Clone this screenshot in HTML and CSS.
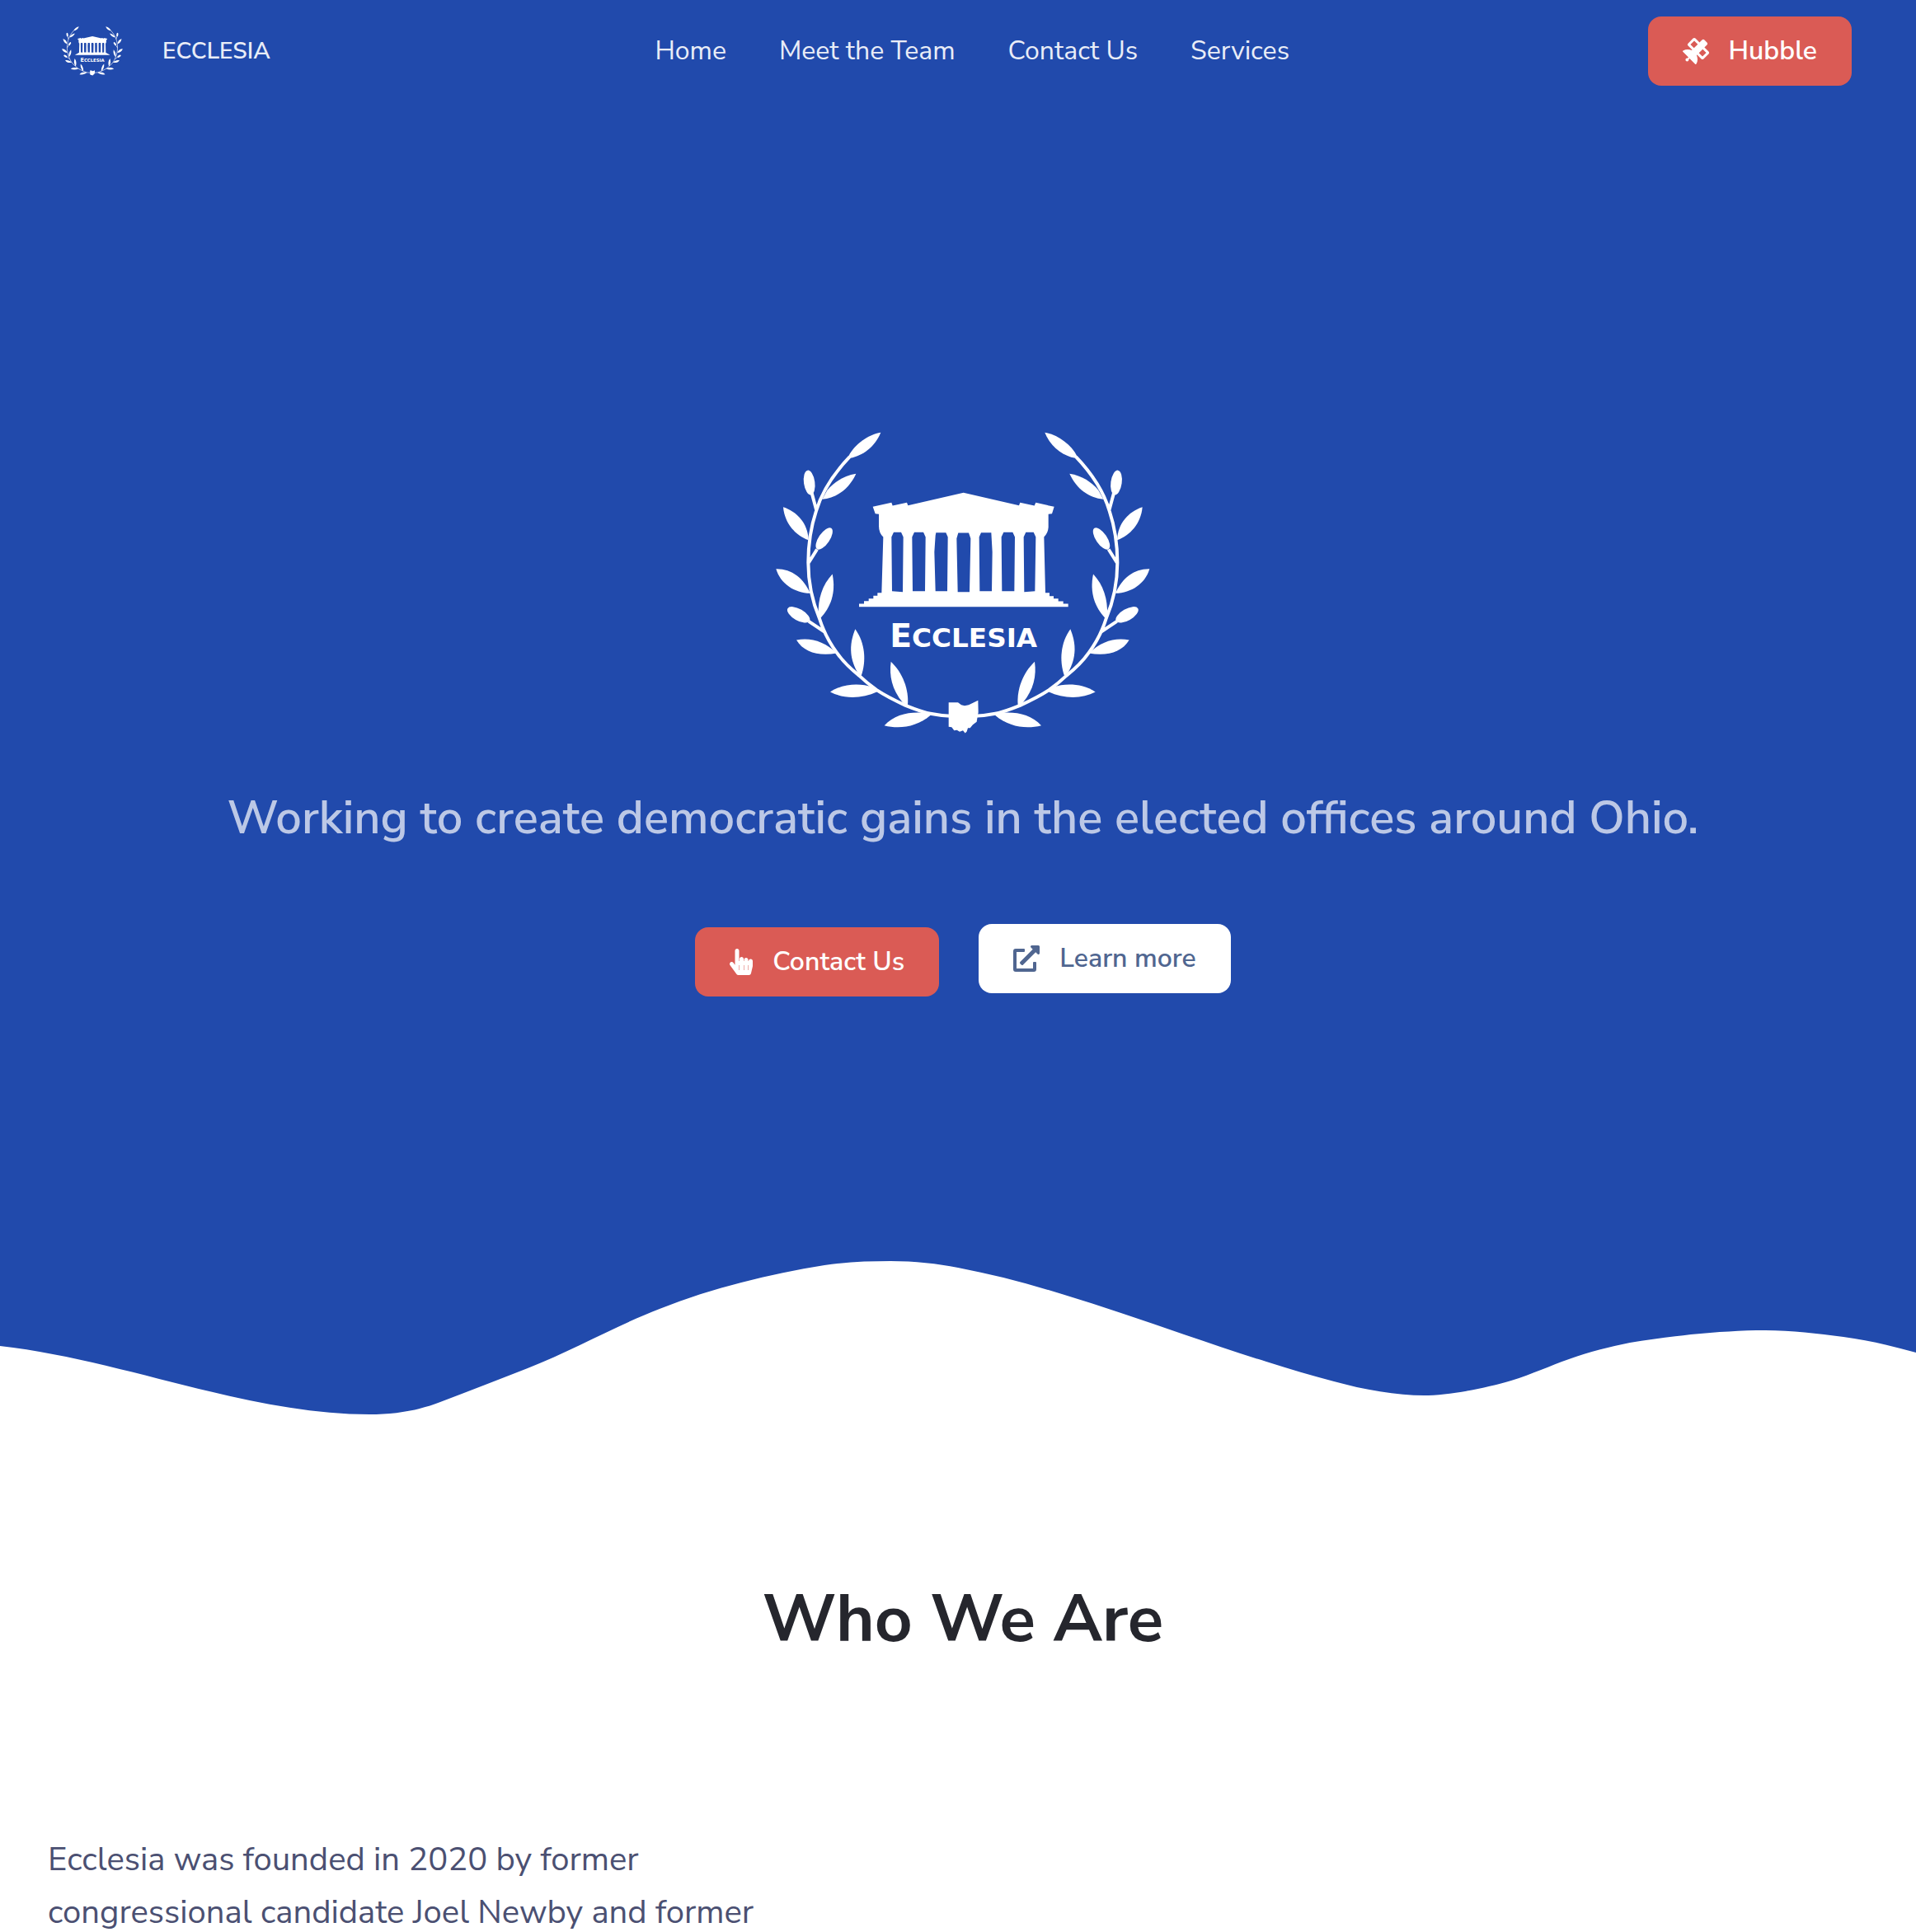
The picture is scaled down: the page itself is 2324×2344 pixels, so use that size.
FILE: index.html
```html
<!DOCTYPE html>
<html lang="en">
<head>
<meta charset="utf-8">
<meta name="viewport" content="width=device-width, initial-scale=1">
<title>Ecclesia</title>
<link rel="stylesheet" href="styles.css">
</head>
<body>
<svg class="sprite" aria-hidden="true">
  <defs>
    <g id="branch">
      <path class="stem" d="M332 163C270 228 228 300 210 360C195 405 181 470 181 548C181 630 198 695 222 752C237 800 262 845 285 876C310 912 338 937 367 960C388 980 408 996 430 1012C465 1035 500 1052 535 1068C565 1080 595 1092 625 1098C650 1103 672 1106 700 1107M194 295L211 358M213 500L183 548M183 762L240 800"/>
      <path d="M445 75C400 82 350 118 328 160L334 168C380 160 425 125 445 75Z"/>
      <path d="M355 225C310 232 275 255 250 285L232 318C285 313 330 280 355 225Z"/>
      <path d="M90 346C140 362 180 405 182 466C135 450 95 405 90 346Z"/>
      <path d="M64 571C120 570 165 605 188 660C130 658 80 625 64 571Z"/>
      <path d="M269 590C283 660 262 710 226 750L218 738C216 680 232 630 269 590Z"/>
      <path d="M138 830C190 820 240 835 285 878C220 890 165 875 138 830Z"/>
      <path d="M352 790C388 840 393 905 374 960L360 948C328 890 332 840 352 790Z"/>
      <path d="M261 1019C310 985 375 988 412 1000L432 1018C375 1045 310 1045 261 1019Z"/>
      <path d="M482 909C525 950 548 1010 543 1068L525 1058C485 1010 475 960 482 909Z"/>
      <path d="M458 1141C495 1100 550 1090 605 1095L627 1103C575 1148 510 1155 458 1141Z"/>
      <ellipse cx="185" cy="257" rx="20" ry="45" transform="rotate(-8 185 257)"/>
      <ellipse cx="239" cy="461" rx="20" ry="46" transform="rotate(34 239 461)"/>
      <ellipse cx="146" cy="738" rx="46" ry="21" transform="rotate(30 146 738)"/>
    </g>
    <g id="emblem">
      <use href="#branch"/>
      <use href="#branch" transform="translate(1487 0) scale(-1 1)"/>
      <path d="M692 1057L726 1057 738 1066 750 1069 765 1066 782 1058 799 1050 800 1093 796 1115 794 1128 780 1138 770 1150 762 1150 758 1163 752 1169 744 1159 732 1164 722 1158 712 1159 703 1147 692 1146Z"/>
      <path transform="translate(330 240)" fill-rule="evenodd" d="M86 105L154 90 158 101 210 90 214 100 416 54 618 100 622 90 674 101 679 90 746 105 738 130 725 132V180Q724 200 709 215L714 418H729V430H744V439H761V449H779V458H797V469H36V458H54V448H71V439H88V429H103V418H118L124 215Q108 200 108 175V132L95 130Z
        M162 198H189L197 215 195 415 156 412 154 215Z M237 198H270L278 215 276 412H231L229 215Z M316 199H352L359 215 357 412H314L310 270 314 210Z M397 200H435L442 220 438 415H395L391 220Z M480 199H517L521 270 519 412H475L473 215Z M562 198H595L603 215 601 412H556L554 215Z M643 198H671L679 215 676 412 637 415 635 215Z"/>
    </g>
  </defs>
</svg>

<header class="hero">
  <div class="navbar">
    <a class="brand" href="#">
      <svg class="brand-mark" viewBox="63 73 1362 1100" aria-hidden="true">
        <use href="#emblem"/>
        <text class="emblem-name" x="746" y="855" text-anchor="middle"><tspan class="emblem-initial">E</tspan>CCLESIA</text>
      </svg>
      <span>ECCLESIA</span>
    </a>
    <nav class="nav">
      <a href="#">Home</a>
      <a href="#">Meet the Team</a>
      <a href="#">Contact Us</a>
      <a href="#">Services</a>
    </nav>
    <button class="btn btn-primary" type="button">
      <svg class="icon" viewBox="0 0 512 512" aria-hidden="true"><path d="M502.6 310l-96.7 96.8a31.9 31.9 0 0 1-45 0L280.6 326.300l-9.900 9.900a190.600 190.600 0 0 1-5.400 168.500c-4.500 8.500-16.400 9.600-23.200 2.800L134.500 400l-17.800 17.800c.7 2.600 1.600 5 1.600 7.800a32 32 0 1 1-32-32c2.800 0 5.200.9 7.800 1.600l17.800-17.800L4.400 269.900c-6.800-6.800-5.700-18.600 2.800-23.200a190.600 190.600 0 0 1 168.500-5.400l9.800-9.800-80.300-80.400a32 32 0 0 1 0-45.100L202 9.300A31.600 31.600 0 0 1 224.500 0a32 32 0 0 1 22.600 9.300l80.300 80.300 47.800-47.900a33.600 33.600 0 0 1 47.500 0l47.500 47.500a33.600 33.600 0 0 1 0 47.500l-47.800 47.900L502.700 265A31.800 31.800 0 0 1 502.600 310ZM219.600 197.400l73.800-73.800-68.900-68.900-73.800 73.800Zm237.700 90.100-68.900-68.900-73.800 73.800 68.900 68.900Z"/></svg>
      Hubble
    </button>
  </div>

  <div class="hero-body">
    <svg class="hero-mark" viewBox="63 73 1362 1100" role="img" aria-label="Ecclesia">
      <use href="#emblem"/>
      <text class="emblem-name" x="746" y="855" text-anchor="middle"><tspan class="emblem-initial">E</tspan>CCLESIA</text>
    </svg>
    <p class="tagline">Working to create democratic gains in the elected offices around Ohio.</p>
    <div class="actions">
      <button class="btn btn-primary" type="button">
        <svg class="icon icon-hand" viewBox="0 0 448 512" aria-hidden="true"><path d="M448 240v96c0 3.084-.356 6.159-1.063 9.162l-32 136C410.686 499.23 394.562 512 376 512H168a40.004 40.004 0 0 1-32.35-16.473l-127.997-176c-12.993-17.866-9.043-42.883 8.822-55.876 17.867-12.994 42.884-9.043 55.877 8.823L104 315.992V40c0-22.091 17.908-40 40-40s40 17.909 40 40v200h8v-40c0-22.091 17.908-40 40-40s40 17.909 40 40v40h8v-24c0-22.091 17.908-40 40-40s40 17.909 40 40v24h8c0-22.091 17.908-40 40-40s40 17.909 40 40zm-256 80h-8v96h8v-96zm88 0h-8v96h8v-96zm88 0h-8v96h8v-96z"/></svg>
        Contact Us
      </button>
      <button class="btn btn-light" type="button">
        <svg class="icon" viewBox="0 0 512 512" aria-hidden="true"><path d="M432 320H400a16 16 0 0 0-16 16V448H64V128H208a16 16 0 0 0 16-16V80a16 16 0 0 0-16-16H48A48 48 0 0 0 0 112V464a48 48 0 0 0 48 48H400a48 48 0 0 0 48-48V336A16 16 0 0 0 432 320ZM488 0h-128c-21.370 0-32.050 25.910-17 41l35.730 35.730L135 320.370a24 24 0 0 0 0 34L157.670 377a24 24 0 0 0 34 0L435.280 133.320 471 169c15 15 41 4.500 41-17V24A24 24 0 0 0 488 0Z"/></svg>
        Learn more
      </button>
    </div>
  </div>

  <svg class="wave" viewBox="0 1500 2324 240" aria-hidden="true"><path d="M0 1633C150 1650 300 1716 448 1716C482 1716 511 1710 534 1701C570 1687 605 1674 640 1660C695 1638 748 1608 800 1588C865 1562 933 1546 1000 1535C1027 1531 1054 1530 1080 1530C1110 1530 1137 1533 1162 1538C1204 1546 1246 1557 1288 1570C1337 1585 1387 1602 1436 1619C1469 1630 1503 1642 1536 1652C1564 1661 1591 1669 1618 1676C1654 1686 1695 1693 1727 1693C1757 1693 1803 1684 1833 1675C1859 1667 1880 1657 1903 1649C1928 1640 1952 1634 1977 1629C2001 1625 2026 1622 2051 1619C2083 1616 2112 1614 2141 1614C2174 1614 2204 1618 2236 1622C2266 1626 2295 1633 2324 1641V1741H0Z"/></svg>
</header>

<main class="about">
  <h1>Who We Are</h1>
  <p class="about-text">Ecclesia was founded in 2020 by former congressional candidate Joel Newby and former</p>
</main>
</body>
</html>
```
FILE: styles.css
```css
* { box-sizing: border-box; }

body {
  margin: 0;
  background: #fff;
  color: #4b5072;
  font-family: "Nunito Sans", Nunito, Lato, "Open Sans", sans-serif;
  font-size: 32px;
  line-height: 48px;
}

.sprite {
  position: absolute;
  width: 0;
  height: 0;
}

.stem {
  fill: none;
  stroke: #fff;
  stroke-width: 12px;
}

.emblem-name {
  font-family: "DejaVu Sans", sans-serif;
  font-weight: 700;
  font-size: 98px;
}

.emblem-initial { font-size: 118px; }

.hero {
  background: #214aac;
  color: #fff;
}

.navbar {
  display: flex;
  align-items: center;
  padding: 20px 78px 20px 75px;
}

.brand {
  display: flex;
  align-items: center;
  gap: 48px;
  margin-right: 32px;
  color: #e9edf7;
  font-size: 28px;
  font-weight: 600;
  text-decoration: none;
}

.brand-mark {
  width: 74px;
  height: 60px;
  fill: #fff;
}

.nav {
  display: flex;
  gap: 64px;
  margin: 0 auto;
}

.nav a {
  color: #e9edf7;
  font-weight: 400;
  text-decoration: none;
}

.btn {
  display: flex;
  align-items: center;
  gap: 24px;
  padding: 18px 42px;
  border: 0;
  border-radius: 16px;
  font: inherit;
  font-weight: 600;
  cursor: pointer;
}

.btn-primary {
  background: #da5b55;
  color: #fff;
}

.btn-light {
  background: #fff;
  color: #506690;
}

.icon {
  width: 32px;
  height: 32px;
  fill: currentColor;
}

.icon-hand { width: 28px; }

.hero-body {
  display: flex;
  flex-direction: column;
  align-items: center;
  padding: 400px 0 291px 12px;
}

.hero-mark {
  width: 454px;
  height: 367px;
  fill: #fff;
}

.tagline {
  margin: 68px 0 94px;
  color: #bcc8e6;
  font-size: 56px;
  font-weight: 600;
  line-height: 68px;
  text-align: center;
}

.actions {
  display: flex;
  align-items: flex-end;
  gap: 48px;
}

.btn-light { margin-bottom: 4px; }

.wave {
  display: block;
  width: 100%;
  fill: #fff;
}

.about { padding: 177px 0 0 12px; }

.about h1 {
  margin: 0 0 211px;
  color: #25262d;
  font-size: 80px;
  font-weight: 700;
  line-height: 96px;
  text-align: center;
}

.about-text {
  max-width: 920px;
  margin: 0 0 0 46px;
  font-size: 40px;
  font-weight: 400;
  line-height: 64px;
}
```
